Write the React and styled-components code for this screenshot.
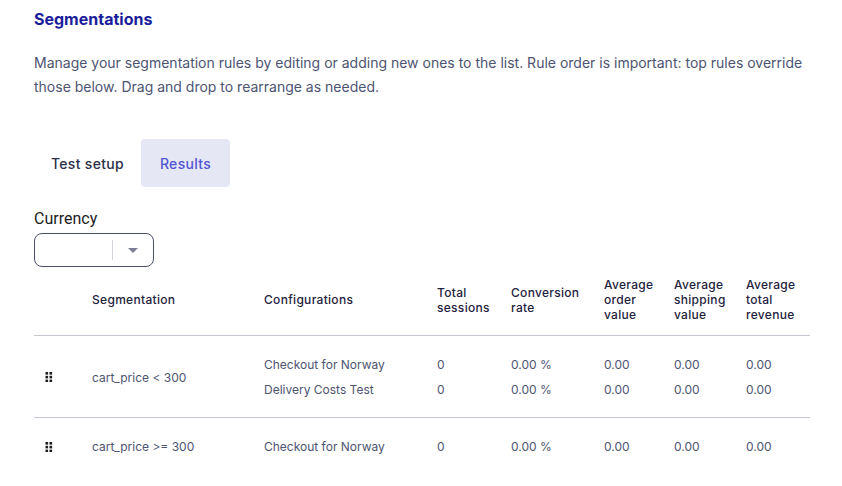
import React from "react";
import styled, { createGlobalStyle } from "styled-components";

const GlobalStyle = createGlobalStyle`
  body {
    margin: 0;
    background: #ffffff;
    font-family: Inter, "Noto Sans", sans-serif;
  }
`;

const columns = "58px 172px 173px 74px 93px 70px 72px 64px";

const headers = [
  "",
  "Segmentation",
  "Configurations",
  "Total sessions",
  "Conversion rate",
  "Average order value",
  "Average shipping value",
  "Average total revenue",
];

const rows = [
  {
    rule: "cart_price < 300",
    configs: [
      { name: "Checkout for Norway", sessions: "0", rate: "0.00 %", order: "0.00", shipping: "0.00", revenue: "0.00" },
      { name: "Delivery Costs Test", sessions: "0", rate: "0.00 %", order: "0.00", shipping: "0.00", revenue: "0.00" },
    ],
  },
  {
    rule: "cart_price >= 300",
    configs: [
      { name: "Checkout for Norway", sessions: "0", rate: "0.00 %", order: "0.00", shipping: "0.00", revenue: "0.00" },
    ],
  },
];

function DragHandle() {
  return (
    <svg width="8" height="10" viewBox="0 0 8 10">
      {[0, 3.8, 7.6].map((y) =>
        [0, 4].map((x) => <rect key={`${x}-${y}`} x={x + 0.5} y={y} width="2.6" height="2.6" fill="#1b1b1f" />)
      )}
    </svg>
  );
}

function App() {
  return (
    <Page>
      <GlobalStyle />
      <Title>Segmentations</Title>
      <Description>
        Manage your segmentation rules by editing or adding new ones to the list. Rule order is important: top rules
        override those below. Drag and drop to rearrange as needed.
      </Description>
      <Tabs>
        <Tab>Test setup</Tab>
        <Tab $active>Results</Tab>
      </Tabs>
      <Label>Currency</Label>
      <Select>
        <SelectValue />
        <Divider />
        <Caret />
      </Select>
      <Table>
        <HeaderRow>
          {headers.map((h, i) => (
            <HeaderCell key={i}>{h}</HeaderCell>
          ))}
        </HeaderRow>
        {rows.map((row, i) => (
          <Row key={i} $last={i === rows.length - 1}>
            <HandleCell>
              <DragHandle />
            </HandleCell>
            <RuleCell>{row.rule}</RuleCell>
            <Stack>
              {row.configs.map((c) => (
                <Line key={c.name}>{c.name}</Line>
              ))}
            </Stack>
            {["sessions", "rate", "order", "shipping", "revenue"].map((key) => (
              <Stack key={key}>
                {row.configs.map((c, j) => (
                  <Line key={j}>{c[key]}</Line>
                ))}
              </Stack>
            ))}
          </Row>
        ))}
      </Table>
    </Page>
  );
}

const Page = styled.div`
  width: 776px;
  padding: 7px 34px 0;
`;

const Title = styled.h2`
  margin: 0;
  font-size: 16px;
  line-height: 24px;
  font-weight: 700;
  color: #1b1e9c;
`;

const Description = styled.p`
  margin: 20px 0 0;
  font-size: 14px;
  line-height: 24px;
  color: #4d5472;
`;

const Tabs = styled.div`
  display: flex;
  margin-top: 40px;
`;

const Tab = styled.div`
  height: 48px;
  display: flex;
  align-items: center;
  padding: ${(p) => (p.$active ? "0 19px 0 19px" : "0 17px")};
  border-radius: 4px;
  font-size: 14px;
  font-weight: 500;
  letter-spacing: 0.3px;
  color: ${(p) => (p.$active ? "#5154d4" : "#2b2f48")};
  background: ${(p) => (p.$active ? "#e6e7f5" : "transparent")};
`;

const Label = styled.div`
  margin-top: 22px;
  font-family: Roboto, "Liberation Sans", sans-serif;
  font-size: 16px;
  line-height: 20px;
  color: #1c1c1c;
`;

const Select = styled.div`
  margin-top: 4px;
  width: 118px;
  height: 32px;
  display: flex;
  align-items: center;
  border: 1px solid #4b4f6c;
  border-radius: 8px;
`;

const SelectValue = styled.div`
  flex: 1;
`;

const Divider = styled.div`
  width: 1px;
  height: 20px;
  background: #d3d4dc;
`;

const Caret = styled.div`
  width: 0;
  height: 0;
  margin: 0 15px;
  border-left: 5px solid transparent;
  border-right: 5px solid transparent;
  border-top: 5px solid #7c7f95;
`;

const Table = styled.div`
  display: flex;
  flex-direction: column;
`;

const HeaderRow = styled.div`
  display: grid;
  grid-template-columns: ${columns};
  align-items: center;
  padding: 10px 0 13px;
  border-bottom: 1px solid #c6c7d1;
`;

const HeaderCell = styled.div`
  font-size: 12px;
  line-height: 15px;
  font-weight: 500;
  letter-spacing: 0.3px;
  color: #1f2240;
  padding-right: 6px;
`;

const Row = styled.div`
  display: grid;
  grid-template-columns: ${columns};
  align-items: center;
  padding: 16px 0 15px;
  border-bottom: ${(p) => (p.$last ? "none" : "1px solid #c6c7d1")};
`;

const HandleCell = styled.div`
  display: flex;
  padding-left: 11px;
`;

const RuleCell = styled.div`
  font-size: 12px;
  color: #4d5472;
`;

const Stack = styled.div`
  display: flex;
  flex-direction: column;
`;

const Line = styled.div`
  font-size: 12px;
  line-height: 25px;
  color: #4d5472;
`;

export default App;
